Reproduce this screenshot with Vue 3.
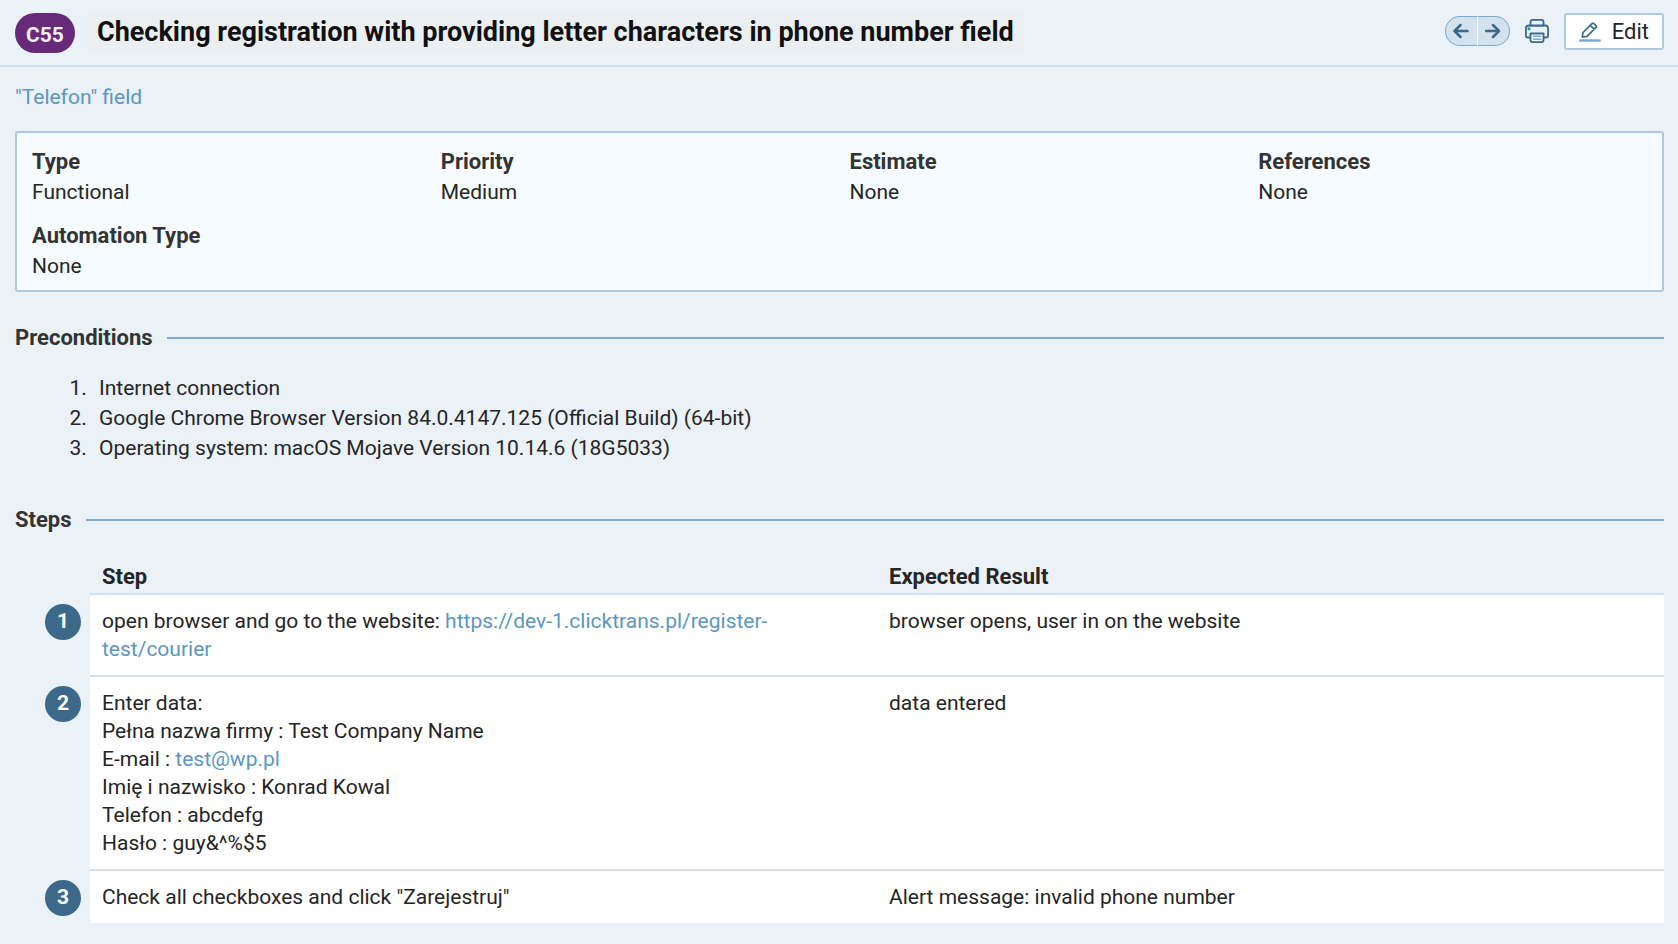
<script setup>
const fields = [
  { label: 'Type', value: 'Functional' },
  { label: 'Priority', value: 'Medium' },
  { label: 'Estimate', value: 'None' },
  { label: 'References', value: 'None' },
  { label: 'Automation Type', value: 'None' },
]

const preconditions = [
  'Internet connection',
  'Google Chrome Browser Version 84.0.4147.125 (Official Build) (64-bit)',
  'Operating system: macOS Mojave Version 10.14.6 (18G5033)',
]

const steps = [
  {
    lines: [
      {
        text: 'open browser and go to the website: ',
        link: 'https://dev-1.clicktrans.pl/register-test/courier',
        href: 'https://dev-1.clicktrans.pl/register-test/courier',
      },
    ],
    expected: 'browser opens, user in on the website',
  },
  {
    lines: [
      { text: 'Enter data:' },
      { text: 'Pełna nazwa firmy : Test Company Name' },
      { text: 'E-mail : ', link: 'test@wp.pl', href: 'mailto:test@wp.pl' },
      { text: 'Imię i nazwisko : Konrad Kowal' },
      { text: 'Telefon : abcdefg' },
      { text: 'Hasło : guy&^%$5' },
    ],
    expected: 'data entered',
  },
  {
    lines: [{ text: 'Check all checkboxes and click "Zarejestruj"' }],
    expected: 'Alert message: invalid phone number',
  },
]
</script>

<template>
  <div class="page">
    <header class="header">
      <span class="badge">C55</span>
      <h1 class="title">Checking registration with providing letter characters in phone number field</h1>
      <div class="actions">
        <div class="pager">
          <button type="button" class="pager-button" aria-label="Previous test case">
            <svg width="16" height="16" viewBox="0 0 16 16" fill="none" stroke="#3a6a8c" stroke-width="2.5" stroke-linecap="round" stroke-linejoin="round">
              <path d="M14.500 8H1.500M7.500 2L1.500 8l6 6" />
            </svg>
          </button>
          <button type="button" class="pager-button" aria-label="Next test case">
            <svg width="16" height="16" viewBox="0 0 16 16" fill="none" stroke="#3a6a8c" stroke-width="2.5" stroke-linecap="round" stroke-linejoin="round">
              <path d="M1 8h13M8 2l6 6-6 6" />
            </svg>
          </button>
        </div>
        <button type="button" class="print" aria-label="Print">
          <svg width="24" height="24" viewBox="0 0 24 24" fill="none" stroke="#3a6a8c" stroke-width="1.800" stroke-linejoin="round">
            <path d="M5.500 18.500H3Q.9 18.500.9 16.500V9.500Q.9 6.500 3.900 6.500H20.100Q23.100 6.500 23.100 9.500V16.500Q23.100 18.500 21 18.500H18.500" />
            <path d="M5.500 6.500V2.900Q5.500.9 7.500.9H16.500Q18.500.9 18.500 2.900V6.500Z" fill="#eaf1f7" />
            <path d="M5.500 14.500H18.500V21.100Q18.500 23.100 16.500 23.100H7.500Q5.500 23.100 5.500 21.100Z" fill="#f6fbff" />
            <path d="M7.800 17.300H16.200M7.800 20.300H16.200" stroke="#7dabcf" stroke-width="1.500" />
            <circle cx="4" cy="9.800" r="1.600" fill="#1a9b6c" stroke="none" />
          </svg>
        </button>
        <button type="button" class="edit">
          <svg width="22" height="20" viewBox="0 0 22 20" fill="none" stroke="#3a6a8c" stroke-width="1.700" stroke-linejoin="round">
            <path d="M4 10.500L13.300 1.400Q14 .8 14.700 1.400L17.200 3.800Q17.800 4.500 17.200 5.200L8 14.300L3.300 15ZM11.300 3.300l4 4" />
            <path d="M1.300 18.500H20.700" stroke="#7dabcf" stroke-width="2.500" stroke-linecap="round" />
          </svg>
          Edit
        </button>
      </div>
    </header>

    <main class="content">
      <a class="section-link" href="#telefon-field">"Telefon" field</a>

      <dl class="fields">
        <div v-for="field in fields" :key="field.label">
          <dt>{{ field.label }}</dt>
          <dd>{{ field.value }}</dd>
        </div>
      </dl>

      <h2 class="heading">Preconditions</h2>
      <ol class="preconditions">
        <li v-for="item in preconditions" :key="item">{{ item }}</li>
      </ol>

      <h2 class="heading">Steps</h2>
      <table class="steps">
        <thead>
          <tr>
            <td class="number-column"></td>
            <th scope="col">Step</th>
            <th scope="col">Expected Result</th>
          </tr>
        </thead>
        <tbody>
          <tr v-for="(step, index) in steps" :key="index">
            <td class="number-cell"><span class="number">{{ index + 1 }}</span></td>
            <td class="cell">
              <div v-for="line in step.lines" :key="line.text">
                {{ line.text }}<a v-if="line.link" :href="line.href">{{ line.link }}</a>
              </div>
            </td>
            <td class="cell">{{ step.expected }}</td>
          </tr>
        </tbody>
      </table>
    </main>
  </div>
</template>

<style>
body {
  background: #eaf1f7;
}
</style>

<style scoped>
.page {
  font-family: Roboto, "Liberation Sans", sans-serif;
  font-size: 21px;
  line-height: 28px;
  color: #252525;
}

a {
  color: #5a97c1;
  text-decoration: none;
}

button {
  font: inherit;
  color: inherit;
  cursor: pointer;
}

.header {
  display: flex;
  align-items: flex-start;
  gap: 12px;
  padding: 13px 14px 12px 15px;
  border-bottom: 2px solid #d3e1ec;
}

.badge {
  box-sizing: border-box;
  width: 60px;
  height: 40px;
  padding-top: 2px;
  border-radius: 20px;
  background: #672a7a;
  color: #f4eef6;
  font-size: 21px;
  font-weight: 700;
  line-height: 40px;
  text-align: center;
}

.title {
  margin: 0;
  padding: 1px 10px 0;
  background: #eceff1;
  color: #111;
  font-size: 27px;
  font-weight: 700;
  line-height: 36px;
}

.actions {
  display: flex;
  align-items: flex-start;
  gap: 15px;
  margin-left: auto;
}

.pager {
  display: flex;
  height: 30px;
  margin-top: 3px;
}

.pager-button {
  display: flex;
  align-items: center;
  justify-content: center;
  width: 32px;
  padding: 0;
  border: 1px solid #7dabcf;
  background: #d3e2ec;
}

.pager-button:first-child {
  width: 33px;
  border-right-color: #f6fbff;
  border-radius: 15px 0 0 15px;
}

.pager-button:last-child {
  border-left: 0;
  border-radius: 0 15px 15px 0;
}

.print {
  display: flex;
  margin-top: 6px;
  padding: 0;
  border: 0;
  background: none;
}

.edit {
  display: flex;
  align-items: center;
  gap: 11px;
  height: 37px;
  padding: 0 13px;
  border: 2px solid #aecadf;
  border-radius: 3px;
  background: #fff;
  font-size: 22px;
}

.content {
  padding: 16px 14px 21px 15px;
}

.section-link {
  display: block;
}

.fields {
  display: grid;
  grid-template-columns: repeat(4, 1fr);
  gap: 14px 20px;
  margin: 20px 0 32px;
  padding: 14px 15px 9px;
  border: 2px solid #aecadf;
  border-radius: 3px;
  background: #f6fbff;
  line-height: 30px;
}

.fields dt {
  color: #333;
  font-size: 22px;
  font-weight: 700;
}

.fields dd {
  margin: 0;
}

.heading {
  display: flex;
  align-items: center;
  gap: 14px;
  margin: 0;
  color: #333;
  font-size: 22px;
  font-weight: 700;
}

.heading::after {
  content: "";
  flex: 1;
  height: 2px;
  background: #7dabcf;
}

.preconditions {
  margin: 21px 0 43px;
  padding-left: 77px;
  line-height: 30px;
}

.preconditions li {
  padding-left: 7px;
}

.steps {
  width: 100%;
  margin-top: 28px;
  border-spacing: 0;
  table-layout: fixed;
}

.steps th {
  padding: 1px 12px 2px;
  font-size: 22px;
  font-weight: 700;
  text-align: left;
}

.number-column {
  width: 75px;
  padding: 0;
}

.number-cell {
  padding: 11px 9px 0 30px;
  vertical-align: top;
}

.number {
  display: block;
  width: 36px;
  padding-bottom: 2px;
  border-radius: 18px;
  background: #3c698a;
  color: #fff;
  font-weight: 700;
  line-height: 34px;
  text-align: center;
}

.cell {
  padding: 12px;
  border-top: 2px solid #d3e1ec;
  background: #fff;
  vertical-align: top;
}
</style>
